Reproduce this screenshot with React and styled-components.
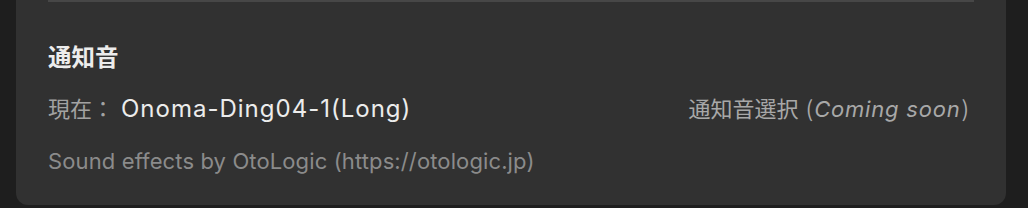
import styled, { createGlobalStyle } from "styled-components";

const GlobalStyle = createGlobalStyle`
  html, body {
    margin: 0;
    padding: 0;
    background: #1e1e1e;
    font-family: Inter, "Noto Sans CJK JP", sans-serif;
  }
`;

const Page = styled.div`
  height: 208px;
  padding: 0 22px 3px 16px;
  box-sizing: border-box;
  display: flex;
`;

const Card = styled.section`
  flex: 1;
  background: #313131;
  border-radius: 0 0 12px 12px;
  padding: 0 32px;
  display: flex;
  flex-direction: column;
`;

const Divider = styled.div`
  height: 2px;
  background: #474747;
`;

const Title = styled.h3`
  margin: 40px 0 0;
  font-size: 23.5px;
  font-weight: 700;
  color: #ececec;
  line-height: 32px;
`;

const Row = styled.div`
  margin-top: 17px;
  height: 32px;
  display: flex;
  align-items: center;
  justify-content: space-between;
`;

const Current = styled.div`
  display: flex;
  align-items: baseline;
`;

const Label = styled.span`
  font-size: 22px;
  color: #a2a2a2;
  width: 73px;
`;

const Value = styled.span`
  font-size: 24px;
  letter-spacing: 1px;
  color: #ececec;
`;

const Select = styled.span`
  font-size: 22px;
  color: #a8a8a8;
  padding-right: 4px;
  em {
    font-style: italic;
    letter-spacing: 0.8px;
  }
`;

const Paren = styled.span`
  font-family: "Noto Sans CJK JP", sans-serif;
  margin: 0 1px;
`;

const Credit = styled.p`
  margin: 23px 0 0;
  font-size: 22px;
  letter-spacing: 0.12px;
  line-height: 30px;
  color: #8b8b8b;
`;

export default function App() {
  return (
    <>
      <GlobalStyle />
      <Page>
        <Card>
          <Divider />
          <Title>通知音</Title>
          <Row>
            <Current>
              <Label>現在：</Label>
              <Value>Onoma-Ding04-1(Long)</Value>
            </Current>
            <Select>
              通知音選択 <Paren>(</Paren>
              <em>Coming soon</em>
              <Paren>)</Paren>
            </Select>
          </Row>
          <Credit>Sound effects by OtoLogic (https://otologic.jp)</Credit>
        </Card>
      </Page>
    </>
  );
}
